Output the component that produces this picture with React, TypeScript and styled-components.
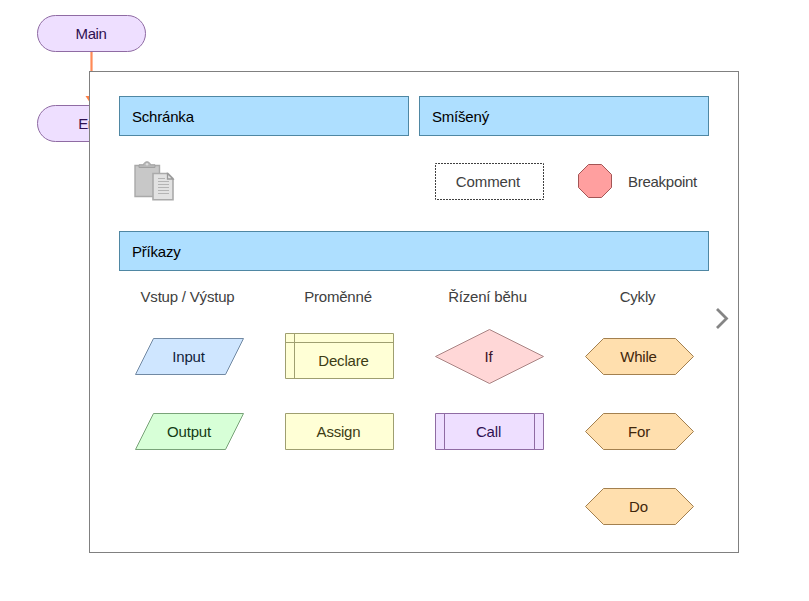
import React from 'react';
import styled, { createGlobalStyle } from 'styled-components';

const GlobalStyle = createGlobalStyle`
  html, body { margin: 0; padding: 0; background: #fff; overflow: hidden; }
  body { font-family: "Liberation Sans", Arial, sans-serif; font-size: 15px; line-height: 17px; letter-spacing: -0.2px; }
  svg { display: block; overflow: visible; }
`;

const Window = styled.main`
  position: relative;
  box-sizing: border-box;
  width: 809px;
  height: 601px;
  padding: 15px 0 0 37px;
`;

const Flow = styled.div`
  display: flex;
  flex-direction: column;
  align-items: center;
  width: 109px;
`;

const Terminal = styled.div`
  box-sizing: border-box;
  display: flex;
  align-items: center;
  justify-content: center;
  width: 109px;
  height: 37px;
  border: 1px solid #8f6ba3;
  border-radius: 19px;
  background: #eedfff;
`;

const Dialog = styled.section`
  position: absolute;
  left: 89px;
  top: 71px;
  box-sizing: border-box;
  width: 650px;
  height: 482px;
  padding: 24px 29px;
  border: 1px solid #808080;
  background: #fff;
`;

const Sections = styled.div`
  display: grid;
  grid-template-columns: 290px 290px;
  column-gap: 10px;
`;

const Header = styled.h2`
  box-sizing: border-box;
  display: flex;
  align-items: center;
  height: 40px;
  margin: 0;
  padding: 1px 12px 0;
  border: 1px solid #4f87a3;
  background: #aedfff;
  color: #000;
  font-size: inherit;
  font-weight: 400;
`;

const Tools = styled.div<{ $inset: number }>`
  box-sizing: border-box;
  display: flex;
  align-items: center;
  height: 95px;
  padding-left: ${(p) => p.$inset}px;
  padding-bottom: 4px;
`;

const ShapeFrame = styled.div`
  display: grid;
  place-items: center;
  width: 109px;

  > svg { grid-area: 1 / 1; }
`;

const CommentBox = styled(ShapeFrame)`
  margin-right: 34px;
`;

const PasteSlot = styled.div`
  margin-bottom: 1px;
`;

const OctagonSlot = styled.div`
  margin: 0 16px 1px 0;
`;

const Label = styled.span<{ $color?: string; $x?: number; $y?: number; $track?: number }>`
  grid-area: 1 / 1;
  color: ${(p) => p.$color ?? '#404040'};
  white-space: nowrap;
  letter-spacing: ${(p) => p.$track ?? -0.2}px;
  transform: translate(${(p) => p.$x ?? 0}px, ${(p) => p.$y ?? 0}px);
`;

const Palette = styled.div`
  display: flex;
  height: 260px;
  padding-left: 16px;
  gap: 41px;
`;

const Column = styled.div`
  display: grid;
  grid-template-rows: 12px repeat(3, 37px);
  row-gap: 38px;
  width: 109px;
  padding-top: 17px;
  justify-items: center;
  align-items: center;
  align-content: start;
`;

const ColumnTitle = styled.div<{ $x: number }>`
  align-self: start;
  color: #404040;
  white-space: nowrap;
  transform: translateX(${(p) => p.$x}px);
`;

const Next = styled.button`
  position: absolute;
  right: 9px;
  top: 236px;
  padding: 0;
  border: 0;
  background: none;
`;

type Kind = 'slant' | 'declare' | 'rect' | 'diamond' | 'call' | 'hexagon';

const outlines: Record<Kind, { h: number; d: string }> = {
  slant: { h: 37, d: 'M18.5 .5H108.5L90.5 36.5H.5Z' },
  declare: { h: 47, d: 'M.5 .5H108.5V45.5H.5ZM9.5 .5V45.5M.5 9.5H108.5' },
  rect: { h: 37, d: 'M.5 .5H108.5V36.5H.5Z' },
  diamond: { h: 55, d: 'M54.5 .5L108.5 27.5L54.5 54.5L.5 27.5Z' },
  call: { h: 37, d: 'M.5 .5H108.5V36.5H.5ZM9.5 .5V36.5M99.5 .5V36.5' },
  hexagon: { h: 37, d: 'M18.5 .5H90.5L108.5 18.5L90.5 36.5H18.5L.5 18.5Z' },
};

interface ShapeProps {
  kind: Kind; text: string; fill: string; stroke: string; color: string;
  x?: number; y?: number; track?: number;
}

function Shape({ kind, text, fill, stroke, color, x = 0, y = 0, track }: ShapeProps) {
  const { h, d } = outlines[kind];
  return (
    <ShapeFrame>
      <svg width="109" height={h}><path d={d} fill={fill} stroke={stroke} /></svg>
      <Label $color={color} $x={x} $y={y} $track={track}>{text}</Label>
    </ShapeFrame>
  );
}

const yellow = { fill: '#ffffd6', stroke: '#9f9f70', color: '#3c3c14' };
const orange = { fill: '#ffdfae', stroke: '#a3804f', color: '#3f260b' };

const columns: { title: string; x: number; shapes: ShapeProps[] }[] = [
  {
    title: 'Vstup / Výstup', x: -2, shapes: [
      { kind: 'slant', text: 'Input', fill: '#cfe6ff', stroke: '#7189a3', color: '#12233b', x: -1 },
      { kind: 'slant', text: 'Output', fill: '#d7ffd7', stroke: '#79a379', color: '#143c14', x: -0.5 },
    ],
  },
  {
    title: 'Proměnné', x: -1.5, shapes: [
      { kind: 'declare', text: 'Declare', ...yellow, x: 4, y: 4 },
      { kind: 'rect', text: 'Assign', ...yellow, x: -1 },
    ],
  },
  {
    title: 'Řízení běhu', x: -2, shapes: [
      { kind: 'diamond', text: 'If', fill: '#ffd7d7', stroke: '#a98484', color: '#3c1226', x: -1 },
      { kind: 'call', text: 'Call', fill: '#eedfff', stroke: '#8f6ba3', color: '#2f1152', x: -1 },
    ],
  },
  {
    title: 'Cykly', x: -2, shapes: [
      { kind: 'hexagon', text: 'While', ...orange, x: -1 },
      { kind: 'hexagon', text: 'For', ...orange, x: -0.5 },
      { kind: 'hexagon', text: 'Do', ...orange, x: -1 },
    ],
  },
];

function PasteIcon() {
  return (
    <svg width="40" height="40" viewBox="0 0 40 40" fill="none">
      <path d="M1 4.5H25.5V35.5H1Z" fill="#c8c8c8" stroke="#a9a9a9" strokeWidth="1.4" />
      <path d="M5 6.5V3.8H9.5C10 -.2 16 -.2 16.5 3.8H21V6.5Z" fill="#b8b8b8" stroke="#a1a1a1" />
      <circle cx="13" cy="3.2" r="1.2" fill="#ddd" />
      <path d="M19 12.5H34L39 17.5V38.8H19Z" fill="#e2e2e2" stroke="#aaa" strokeWidth="1.6" />
      <path d="M33.5 12.5V18H39Z" fill="#e6e6e6" stroke="#999" strokeWidth="1.3" />
      <path d="M24 17.5H31M24 20.5H35M24 23.5H35M24 26.5H35M24 29.5H35M24 32.5H35" stroke="#b4b4b4" />
    </svg>
  );
}

export default function App() {
  return (
    <>
      <GlobalStyle />
      <Window>
        <Flow>
          <Terminal><Label $color="#2f1152" $x={-0.5} $track={-0.4}>Main</Label></Terminal>
          <svg width="13" height="53">
            <path d="M6.5 0V46" stroke="#ff8a57" strokeWidth="2.2" />
            <path d="M.5 44H12.5L6.5 53Z" fill="#ff7f45" />
          </svg>
          <Terminal><Label $color="#2f1152" $x={-0.5} $track={-0.4}>End</Label></Terminal>
        </Flow>
        <Dialog>
          <Sections>
            <div>
              <Header>Schránka</Header>
              <Tools $inset={15}><PasteSlot><PasteIcon /></PasteSlot></Tools>
            </div>
            <div>
              <Header>Smíšený</Header>
              <Tools $inset={16}>
                <CommentBox>
                  <svg width="109" height="37">
                    <path d="M.5 .5H108.5V36.5H.5Z" fill="#fff" stroke="#404040" strokeDasharray="2 1" strokeDashoffset=".5" />
                  </svg>
                  <Label $x={-1.5} $track={-0.1}>Comment</Label>
                </CommentBox>
                <OctagonSlot>
                  <svg width="34" height="34">
                    <path d="M10.5 .5H23.5L33.5 10.5V23.5L23.5 33.5H10.5L.5 23.5V10.5Z" fill="#ff9f9f" stroke="#a35555" />
                  </svg>
                </OctagonSlot>
                <Label $track={-0.27}>Breakpoint</Label>
              </Tools>
            </div>
          </Sections>
          <Header>Příkazy</Header>
          <Palette>
            {columns.map((column) => (
              <Column key={column.title}>
                <ColumnTitle $x={column.x}>{column.title}</ColumnTitle>
                {column.shapes.map((shape) => <Shape key={shape.text} {...shape} />)}
              </Column>
            ))}
          </Palette>
          <Next aria-label="Next">
            <svg width="14" height="20" fill="none">
              <path d="M2 1L11.5 10.5L2 20" stroke="#858585" strokeWidth="2.8" />
            </svg>
          </Next>
        </Dialog>
      </Window>
    </>
  );
}
